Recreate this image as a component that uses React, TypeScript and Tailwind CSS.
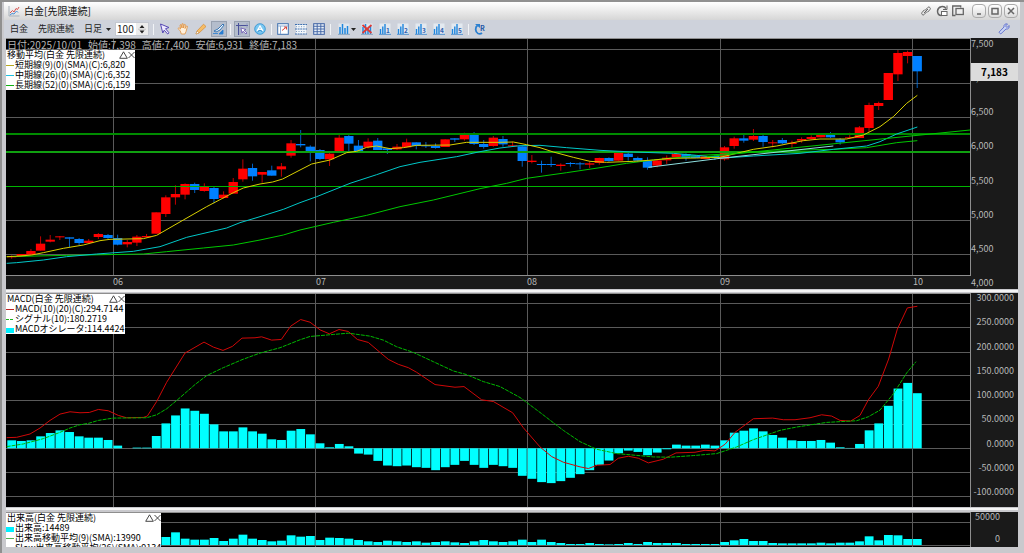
import React from 'react';

type Candle = [up: 0 | 1, top: number, bottom: number, high: number, low: number];

// body top / body bottom / high / low in chart units, one entry per trading day
const CANDLES: Candle[] = [
    [1, 408, 412, 406, 416], [1, 402, 409, 402, 409], [1, 393, 404, 387, 404], [1, 371, 392, 349, 392],
    [1, 359, 365, 345, 367], [1, 349, 352, 348, 360], [0, 352, 356, 352, 382], [0, 357, 369, 354, 375],
    [1, 362, 369, 357, 369], [1, 342, 351, 339, 357], [0, 345, 354, 342, 357], [0, 354, 374, 344, 376],
    [1, 366, 373, 360, 382], [1, 350, 368, 345, 378], [1, 348, 352, 342, 352], [1, 277, 341, 277, 341],
    [1, 232, 282, 226, 291], [1, 222, 232, 196, 254], [1, 192, 224, 190, 238], [0, 192, 210, 188, 219],
    [1, 201, 213, 190, 215], [0, 204, 237, 200, 250], [1, 224, 234, 214, 236], [1, 186, 221, 174, 221],
    [1, 146, 178, 118, 185], [0, 144, 169, 131, 182], [1, 156, 164, 156, 188], [0, 151, 167, 137, 167],
    [1, 139, 148, 129, 170], [1, 70, 107, 60, 113], [0, 72, 76, 30, 82], [0, 80, 94, 76, 124],
    [0, 90, 117, 87, 120], [1, 101, 118, 95, 138], [1, 53, 95, 44, 95], [0, 48, 71, 44, 95],
    [0, 77, 94, 60, 94], [1, 65, 82, 55, 85], [0, 62, 90, 54, 90], [0, 85, 90, 85, 102],
    [1, 80, 88, 72, 90], [1, 67, 82, 56, 82], [0, 67, 78, 67, 88], [0, 76, 79, 66, 84],
    [0, 78, 84, 70, 86], [1, 58, 81, 58, 81], [0, 55, 59, 55, 66], [1, 43, 58, 38, 62],
    [0, 40, 72, 36, 75], [0, 72, 81, 60, 86], [1, 53, 78, 48, 80], [0, 57, 73, 48, 80],
    [1, 76, 79, 65, 80], [0, 79, 123, 79, 140], [1, 122, 126, 105, 130], [0, 132, 135, 122, 158],
    [0, 132, 135, 110, 141], [1, 134, 138, 130, 152], [0, 129, 132, 126, 140], [0, 130, 133, 126, 148],
    [1, 130, 134, 126, 144], [1, 114, 129, 113, 134], [0, 114, 123, 112, 125], [1, 95, 122, 95, 122],
    [0, 101, 111, 97, 122], [0, 114, 122, 110, 126], [0, 123, 143, 112, 149], [1, 121, 137, 118, 142],
    [1, 113, 121, 106, 132], [1, 102, 112, 97, 112], [0, 102, 114, 100, 122], [0, 106, 114, 106, 114],
    [1, 109, 117, 109, 117], [0, 108, 114, 106, 120], [1, 82, 118, 78, 122], [1, 55, 78, 50, 86],
    [0, 55, 62, 42, 68], [1, 48, 59, 27, 63], [0, 48, 66, 45, 80], [1, 67, 70, 60, 82],
    [0, 60, 70, 54, 72], [1, 68, 72, 62, 84], [1, 57, 62, 52, 68], [1, 51, 57, 46, 58],
    [1, 44, 52, 42, 52], [0, 39, 52, 36, 54], [0, 58, 67, 54, 74], [1, 52, 55, 38, 56],
    [1, 22, 54, 18, 54], [1, -45, 24, -52, 36], [1, -51, -42, -55, -30], [1, -141, -60, -141, -60],
    [1, -201, -137, -210, -117], [1, -204, -192, -208, -170], [0, -192, -146, -192, -96],
];

const SMA_SHORT = '20,410 60,408 95,405 130,398 190,385 250,375 300,362 330,358 430,356 470,346 550,300 620,260 700,218 730,204 780,192 818,186 848,177 900,150 935,132 990,120 1040,98 1070,94 1100,82 1130,78 1170,86 1210,83 1250,76 1350,75 1400,67 1500,67 1540,66 1580,74 1620,83 1660,96 1720,112 1770,124 1820,127 1900,124 1960,120 2010,115 2090,114 2160,112 2210,100 2260,88 2330,78 2410,62 2460,57 2540,57 2590,45 2640,20 2680,-10 2720,-50 2752,-74';
const SMA_MID = '20,430 50,428 130,420 200,410 290,402 400,394 480,380 560,352 680,324 720,308 780,290 850,268 900,248 950,230 1050,190 1130,164 1200,140 1260,127 1370,110 1440,95 1500,84 1560,77 1620,76 1700,83 1800,91 1900,96 2020,100 2090,106 2170,114 2260,108 2400,100 2500,88 2600,78 2640,65 2690,42 2752,21';
const SMA_LONG = '20,410 200,406 430,402 500,395 610,384 700,375 780,360 850,345 900,330 1000,307 1100,286 1200,260 1300,240 1440,206 1520,190 1580,175 1700,158 1800,143 1880,130 1960,120 2100,106 2160,103 2280,95 2400,90 2500,88 2600,83 2690,68 2752,62';

const OSCILLATOR = [
    465, 467, 465, 453, 443, 435, 440, 453, 457, 457, 464, 481, 489, 487, 487, 452, 414, 390, 369,
    376, 385, 417, 438, 438, 426, 438, 445, 462, 464, 436, 431, 447, 474, 486, 476, 483, 505, 508,
    527, 541, 543, 541, 546, 548, 555, 546, 539, 527, 539, 548, 539, 543, 548, 572, 581, 591, 594,
    588, 578, 567, 555, 539, 526, 504, 496, 500, 510, 502, 492, 478, 481, 481, 478, 481, 465, 442,
    436, 429, 438, 449, 457, 465, 467, 467, 464, 472, 486, 488, 476, 435, 414, 361, 309, 292, 323,
];

const MACD_LINE = '20,457 50,456 90,446 120,428 150,405 180,386 210,379 240,382 268,381 295,372 325,376 355,390 380,397 430,396 442,392 470,348 500,290 555,202 612,169 640,184 669,194 697,182 726,157 765,156 785,153 815,163 844,161 872,121 902,101 930,109 960,132 988,144 1017,131 1045,137 1072,161 1105,170 1140,200 1165,221 1195,236 1225,246 1250,260 1305,297 1365,305 1392,303 1445,343 1480,348 1538,382 1570,427 1620,485 1655,514 1690,531 1740,545 1765,550 1792,540 1830,538 1855,519 1885,513 1915,519 1945,533 1990,522 2028,503 2085,501 2115,495 2145,497 2175,477 2205,441 2260,400 2318,398 2350,403 2385,403 2430,397 2465,388 2495,392 2520,405 2552,407 2580,390 2605,343 2635,302 2666,220 2692,130 2722,66 2752,61';
const SIGNAL_LINE = '20,484 70,476 130,460 180,441 210,428 240,418 265,414 295,405 340,398 440,397 470,388 500,370 530,345 585,297 620,270 670,246 726,222 780,202 840,186 900,162 930,152 1000,146 1045,142 1110,151 1150,163 1190,183 1240,200 1300,228 1360,256 1400,267 1450,288 1500,303 1560,336 1620,381 1690,435 1740,469 1790,492 1850,505 1960,515 2010,516 2080,511 2150,505 2210,485 2260,463 2340,435 2390,425 2480,411 2570,406 2605,394 2640,374 2680,325 2720,262 2748,228';

const VOLUME = [
    760, 760, 758, 757, 758, 760, 762, 760, 761, 762, 760, 758, 760, 761, 760, 745, 753, 739, 758,
    761, 761, 756, 765, 758, 746, 758, 762, 766, 764, 748, 752, 750, 762, 755, 756, 758, 762, 766,
    768, 764, 766, 768, 766, 770, 768, 766, 769, 771, 766, 762, 766, 768, 766, 761, 768, 761, 768,
    771, 774, 774, 771, 774, 775, 774, 771, 774, 768, 771, 771, 771, 774, 774, 774, 774, 768, 763,
    759, 765, 765, 771, 772, 772, 772, 772, 770, 772, 770, 770, 766, 751, 763, 747, 748, 759, 759,
];

const MONTH_LINES = [339, 947, 1581, 2160, 2738];
const MONTHS = ['06', '07', '08', '09', '10'];
const PRICE_TICKS = ['7,500', '7,000', '6,500', '6,000', '5,500', '5,000', '4,500', '4,000'];
const MACD_TICKS = ['300.0000', '250.0000', '200.0000', '150.0000', '100.0000', '50.0000', '0.0000', '-50.0000', '-100.0000'];

const dayX = (i: number) => 35 + 28.9 * i;

interface ChartProps {
    viewBox: string;
    label: string;
    rows: number[];
    children: React.ReactNode;
}

const Chart: React.FC<ChartProps> = ({ viewBox, label, rows, children }) => (
    <svg viewBox={viewBox} preserveAspectRatio="none" role="img" aria-label={label} className="absolute inset-0 h-full w-full">
        <g stroke="#5a5a5a" shapeRendering="crispEdges">
            {rows.map((y) => <line key={y} x1="18" x2="2910" y1={y} y2={y} vectorEffect="non-scaling-stroke" />)}
            {MONTH_LINES.map((x) => <line key={x} x1={x} x2={x} y1="-300" y2="900" vectorEffect="non-scaling-stroke" />)}
        </g>
        {children}
    </svg>
);

const Line: React.FC<{ points: string; color: string; dash?: string }> = ({ points, color, dash }) => (
    <polyline points={points} fill="none" stroke={color} strokeWidth="1" strokeDasharray={dash} vectorEffect="non-scaling-stroke" />
);

const Bars: React.FC<{ values: number[]; base: number }> = ({ values, base }) => (
    <g fill="#00ffff">
        {values.map((v, i) => (
            <rect key={i} x={dayX(i) - 13} width="26.5" y={Math.min(v, base)} height={Math.abs(v - base)} />
        ))}
    </g>
);

interface LegendItem {
    text: string;
    color: string;
    kind?: 'bar' | 'dash';
}

const Legend: React.FC<{ title: string; items: LegendItem[]; className: string }> = ({ title, items, className }) => (
    <div className={`absolute left-0 bg-white text-[9px] leading-[10px] whitespace-nowrap text-black ${className}`}>
        <div className="flex h-[10px] items-center justify-between pl-px">
            <span>{title}</span>
            <span className="flex">
                <button aria-label="最小化">
                    <svg viewBox="0 0 9 8" className="h-2 w-[9px]"><path d="M4.5 .8 8.3 7.3H.7z" fill="none" stroke="#333" strokeWidth=".9" /></svg>
                </button>
                <button aria-label="閉じる">
                    <svg viewBox="0 0 7 8" className="h-2 w-[7px]"><path d="m.5 1 6 6m0-6-6 6" stroke="#333" strokeWidth=".9" /></svg>
                </button>
            </span>
        </div>
        {items.map((item) => (
            <div key={item.text} className="flex h-[10px] items-center">
                <svg viewBox="0 0 9 8" shapeRendering="crispEdges" className="h-2 w-[9px] shrink-0">
                    {item.kind === 'bar'
                        ? <rect x="0" y="3" width="8" height="5" fill={item.color} />
                        : <path d="M0 4.5h8" stroke={item.color} strokeDasharray={item.kind === 'dash' ? '3 1' : undefined} />}
                </svg>
                <span>{item.text}</span>
            </div>
        ))}
    </div>
);

interface ToolProps {
    label: string;
    pressed?: boolean;
    children: React.ReactNode;
}

const Tool: React.FC<ToolProps> = ({ label, pressed, children }) => (
    <button aria-label={label} aria-pressed={pressed} className={`flex h-[14px] w-[14px] shrink-0 items-center justify-center ${pressed ? 'bg-[#b4bdcc] outline outline-[#98a1b0]' : ''}`}>
        <svg viewBox="0 0 12 12" className="h-3 w-3" fill="none">{children}</svg>
    </button>
);

const Divider = () => <span className="h-[11px] w-px shrink-0 bg-[#f1f3f6]" />;

const MiniBars = () => (
    <>
        <rect x=".5" y=".5" width="11" height="10.5" fill="#dfe6ee" />
        <path d="M2 11V4M4.500 11V1M7 11V5M9.500 11V3" stroke="#1f86dd" strokeWidth="1.500" />
        <path d="M0 11.300h12" stroke="#6f94b8" strokeWidth=".8" />
    </>
);

// stepped bars with a small number in the lower right corner
const PresetIcon: React.FC<{ n: string }> = ({ n }) => (
    <>
        <rect x=".5" y=".5" width="11" height="10.500" fill="#e3e9f0" />
        <path d="M1.500 11V6M3.800 11V3.500M6 11V1" stroke="#1f86dd" strokeWidth="1.400" />
        <path d="M0 11.300h12" stroke="#4f90d0" strokeWidth="1" />
        <text x="7" y="9.500" fontSize="6.500" fontWeight="700" fill="#2f62b0">{n}</text>
    </>
);

const PRESETS = ['1', '2', '3', '4', '5'];

const Toolbar = () => (
    <div className="flex h-[18px] items-center gap-1 bg-[#ced2db] pr-2.5 pl-1.5 text-[9px] leading-3 text-[#222]">
        <span className="pr-1.5">白金</span>
        <span className="pr-1.5">先限連続</span>
        <div className="flex items-center">
            <select aria-label="足種" className="w-[22px] appearance-none">
                <option>日足</option>
            </select>
            <svg viewBox="0 0 5 3" className="h-[3px] w-[5px]"><path d="M0 0h5L2.5 3z" fill="#222" /></svg>
        </div>
        <div className="flex h-[14px] border border-[#c4c8d0] bg-white">
            <input aria-label="表示本数" defaultValue="100" className="w-5 pl-px text-[10px] leading-3 outline-none" />
            <button aria-label="本数の増減" className="flex w-3 items-center justify-center bg-[#ececec]">
                <svg viewBox="0 0 8 10" className="h-2.5 w-2"><path d="M1.500 4 4 1l2.500 3zM1.500 6.500 4 9.500l2.500-3z" fill="#222" /><path d="M0 5.200h8" stroke="#aaa" strokeWidth=".6" /></svg>
            </button>
        </div>
        <Divider />
        <Tool label="選択"><path d="m1.500 1 8.500 3.500-3.500 1.200L10 9.800 8.700 11 5.200 7.200 3.800 10z" fill="#efeaff" stroke="#5548b4" /></Tool>
        <Tool label="移動"><path d="M3.300 8 1 5.500l1-.8L3.600 6 3 2l1-.4L5 5V.8h1.100L6.300 5l1-3.700 1 .3L8 5.500l1.600-2.600.9.500L9 8.500 8 11H4.300z" fill="#fff0dc" stroke="#e0913c" strokeWidth=".8" /></Tool>
        <Tool label="描画"><path d="m1 11 1-3 6.500-6.800L11 3.500 4 10z" fill="#f6bd66" stroke="#d48a35" strokeWidth=".7" /><path d="m1 11 1-3 2 2z" fill="#fff" stroke="#b98243" strokeWidth=".5" /></Tool>
        <Tool label="ライン" pressed><path d="m1 8 4-2 5-5 1 1-4 5-4 2z" fill="#f4faff" stroke="#246ab0" strokeWidth=".9" /><path d="m6 11 4-4v4zM0 10.500h5" fill="#287dd2" stroke="#287dd2" strokeWidth=".8" /></Tool>
        <Divider />
        <Tool label="クロスカーソル" pressed><path d="M2.500 0v12M0 2.500h12" stroke="#49519a" /><path d="m5 5 5 1.500-2 .7L11 10l-1 1-3-2.800-1 2z" fill="#fff" stroke="#6654b0" strokeWidth=".8" /><path d="M4 2.500V12M11 0v5" stroke="#8890bd" strokeWidth=".6" /></Tool>
        <Tool label="同期"><circle cx="6" cy="6" r="5.300" fill="#7ac7f2" stroke="#2b8fd0" strokeWidth=".8" /><path d="M3 8 6 3l3 5M4 6.300h4" stroke="#fff" strokeWidth="1.200" /><path d="m3.500 9 2.500-2 2.500 2" stroke="#2478b8" strokeWidth=".7" /></Tool>
        <Divider />
        <Tool label="チャート設定"><rect x=".7" y=".7" width="10.600" height="10.600" fill="#fff" stroke="#3e6fae" /><path d="M1 3h10M3.500 3v8" stroke="#8cadd6" /><path d="M5 7.500 9.500 4M9.500 4v2.500M9.500 4H7" stroke="#d9463c" /></Tool>
        <Tool label="四本値表示"><rect x="1" y="1" width="10" height="10" fill="#f2f6fa" /><path d="M0 1.500h12M0 6h12M0 11h12" stroke="#3e6fae" strokeDasharray="2 .6" /><path d="M1 3.700h10M1 8.500h10" stroke="#7b99bf" strokeDasharray="1 1.500" /></Tool>
        <Tool label="一覧表"><rect x=".7" y=".7" width="10.600" height="10.600" fill="#e9f0f8" stroke="#3d61a4" /><path d="M.7 3.300h10.600M.7 6h10.600M.7 8.700h10.600M4.200.7v10.600M7.800.7v10.600" stroke="#3d61a4" strokeWidth=".9" /></Tool>
        <Divider />
        <div className="flex items-center pl-0.5">
            <Tool label="指標"><MiniBars /></Tool>
            <svg viewBox="0 0 5 3" className="h-[3px] w-[5px]"><path d="M0 0h5L2.500 3z" fill="#222" /></svg>
        </div>
        <Tool label="指標を消去"><MiniBars /><path d="m1.500 2 9 8m0-8-9 8" stroke="#e03a34" strokeWidth="1.700" /></Tool>
        {PRESETS.map((n) => (
            <Tool key={n} label={`指標セット${n}`}><PresetIcon n={n} /></Tool>
        ))}
        <Divider />
        <Tool label="再読込"><path d="M3.500 2.500C1 4 1 9 4 10.500c1.500.6 3 .3 4-.5" stroke="#2a7fd0" strokeWidth="1.800" /><path d="M1 1h5v4z" fill="#2a7fd0" /><text x="6" y="8" fontSize="7" fontWeight="700" fill="#2458a8">R</text></Tool>
        <button aria-label="設定" className="ml-auto">
            <svg viewBox="0 0 12 12" className="h-3 w-3"><path d="M11 2.500 9 4.500 7.500 3l2-2C7.500.3 5.500 1.800 6 4L1 9.200 2.700 11 8 6c2 .6 3.800-1.300 3-3.500z" fill="#c9d4f5" stroke="#5b6ccd" strokeWidth=".9" /></svg>
        </button>
    </div>
);

const TitleBar = () => (
    <header className="flex h-[18px] items-center bg-linear-to-b from-white to-[#d6d6d6] pl-1">
        <svg viewBox="0 0 12 12" className="h-3 w-3" fill="none">
            <path d="M1 1v10h10.500" stroke="#a9b2bb" />
            <path d="m2 8 2.500-2.500L6 7l2-3.500 1.500 1L11 2" stroke="#d9534f" />
            <path d="m2 10 2-1.500L6 9l2.500-3L10 7.500" stroke="#4c8fd6" />
        </svg>
        <h1 className="ml-1 text-[10px] leading-3 text-[#111]">白金[先限連続]</h1>
        <div className="ml-auto flex items-center gap-1 pr-0.5 text-[#666]">
            <button aria-label="リンク" className="w-3">
                <svg viewBox="0 0 12 12" className="h-3 w-3" fill="none" stroke="currentColor"><path d="M5 5.500 8 2.300c1-1 3.200.8 2 2.200L7.500 7.300M7 6.500 4 9.700c-1 1-3.200-.8-2-2.200l2.500-2.800M4 8l4-4" /></svg>
            </button>
            <button aria-label="切替" className="w-3">
                <svg viewBox="0 0 12 12" className="h-3 w-3" fill="none" stroke="currentColor"><path d="M10 3.500C8 .5 2 1 1.500 6c0 3 2 4.500 4 4.500" strokeWidth="1.500" /><path d="M11 .5v4H7" /><rect x="5.500" y="6.500" width="5.500" height="4" fill="#fff" /></svg>
            </button>
            <button aria-label="複製" className="mr-1 w-3">
                <svg viewBox="0 0 12 12" className="h-3 w-3" fill="none" stroke="currentColor"><path d="M3.500 10.500H.7V1h8v1.500" strokeWidth="1.300" /><rect x="4" y="3.500" width="7.300" height="6" fill="#eee" strokeWidth="1.300" /></svg>
            </button>
            <div className="flex gap-0.5">
                {[
                    { label: '最小化', d: 'M3 8h4' },
                    { label: '最大化', d: 'M2 2.500h6v5.500H2z' },
                    { label: '閉じる', d: 'm2 2 6 6m0-6-6 6' },
                ].map(({ label, d }) => (
                    <button key={label} aria-label={label} className="flex h-[14px] w-[14px] items-center justify-center rounded-sm border border-[#aaa] bg-linear-to-b from-white to-[#dcdcdc]">
                        <svg viewBox="0 0 10 10" className="h-2.5 w-2.5" fill="none" stroke="currentColor" strokeWidth="1.500"><path d={d} /></svg>
                    </button>
                ))}
            </div>
        </div>
    </header>
);

const AXIS = 'flex w-[47px] shrink-0 flex-col justify-between bg-[#1a1a1a] text-[9px] text-[#b8b8b8]';
const PLOT = 'relative min-w-0 flex-1 overflow-hidden border-t border-r border-[#8e8e8e] bg-black';

const PricePanel = () => (
    <section className="flex min-h-0 flex-[251]">
        <div className="flex min-w-0 flex-1 flex-col">
            <div className={`${PLOT} border-b`}>
                <Chart viewBox="18 -243 2892 708" label="ローソク足" rows={[-212, -110, -7, 97, 300, 403]}>
                    {CANDLES.map(([up, top, bottom, high, low], i) => (
                        <g key={i} fill={up ? '#ff0000' : '#0080ff'}>
                            <rect x={dayX(i) - 1.5} y={high} width="3" height={low - high} opacity=".75" />
                            <rect x={dayX(i) - 14} y={top} width="28" height={bottom - top} />
                        </g>
                    ))}
                    <g shapeRendering="crispEdges">
                        <line x1="18" x2="2910" y1="42" y2="42" stroke="#008c00" strokeWidth="2" vectorEffect="non-scaling-stroke" />
                        <line x1="18" x2="2910" y1="96" y2="96" stroke="#10a010" strokeWidth="2" vectorEffect="non-scaling-stroke" />
                        <line x1="18" x2="2910" y1="199" y2="199" stroke="#00b400" vectorEffect="non-scaling-stroke" />
                    </g>
                    <Line points={SMA_LONG} color="#00c800" />
                    <Line points={SMA_MID} color="#00c8c8" />
                    <Line points={SMA_SHORT} color="#d8d000" />
                    <Line points="2120,110 2910,30" color="#00c800" />
                    <Line points="1945,142 2160,115 2500,78" color="#8fe0e0" />
                </Chart>
                <p className="absolute top-0 left-px flex gap-1.5 text-[10px] leading-[11px] whitespace-nowrap text-[#b5b5b5]">
                    <span>日付:2025/10/01</span>
                    <span>始値:7,398</span>
                    <span>高値:7,400</span>
                    <span>安値:6,931</span>
                    <span>終値:7,183</span>
                </p>
                <Legend
                    className="top-[11px] min-w-[129px]"
                    title="移動平均(白金 先限連続)"
                    items={[
                        { text: '短期線(9)(0)(SMA)(C):6,820', color: '#b8a820' },
                        { text: '中期線(26)(0)(SMA)(C):6,352', color: '#20c0e0' },
                        { text: '長期線(52)(0)(SMA)(C):6,159', color: '#10b010' },
                    ]}
                />
            </div>
            <div className="grid h-[13px] shrink-0 grid-cols-[107fr_203fr_211fr_193fr_193fr_58fr] bg-[#1a1a1a] text-[9px] leading-[11px] text-[#b8b8b8]">
                <span />
                {MONTHS.map((m) => <span key={m}>{m}</span>)}
            </div>
        </div>
        <div className={`${AXIS} relative leading-3`}>
            {PRICE_TICKS.map((t) => <span key={t}>{t}</span>)}
            <div className="absolute top-[10%] right-0 left-0 bg-[#dcdcdc] py-px text-center text-[10px] leading-4 font-bold text-black">7,183</div>
        </div>
    </section>
);

const MacdPanel = () => (
    <section className="flex min-h-0 flex-[214]">
        <div className={PLOT}>
            <Chart viewBox="18 24 2892 642" label="MACD" rows={[54, 126, 199, 271, 344, 417, 489, 562, 635]}>
                <Bars values={OSCILLATOR} base={489} />
                <Line points={MACD_LINE} color="#d00808" />
                <Line points={SIGNAL_LINE} color="#00b800" dash="4 1" />
            </Chart>
            <Legend
                className="top-0 min-w-[117px]"
                title="MACD(白金 先限連続)"
                items={[
                    { text: 'MACD(10)(20)(C):294.7144', color: '#c02020' },
                    { text: 'シグナル(10):180.2719', color: '#20b020', kind: 'dash' },
                    { text: 'MACDオシレータ:114.4424', color: '#00f0ff', kind: 'bar' },
                ]}
            />
        </div>
        <div className={`${AXIS} pr-1 pb-2.5 text-right leading-[10px]`}>
            {MACD_TICKS.map((t) => <span key={t}>{t}</span>)}
        </div>
    </section>
);

const VolumePanel = () => (
    <section className="flex min-h-0 flex-[35]">
        <div className={PLOT}>
            <Chart viewBox="18 681 2892 102" label="出来高" rows={[709, 778]}>
                <Bars values={VOLUME} base={777} />
            </Chart>
            <Legend
                className="top-0 min-w-[151px]"
                title="出来高(白金 先限連続)"
                items={[
                    { text: '出来高:14489', color: '#00f0ff', kind: 'bar' },
                    { text: '出来高移動平均(9)(SMA):13990', color: '#50b050' },
                    { text: 'Slow出来高移動平均(26)(SMA):9134', color: '#f0b0b0' },
                ]}
            />
        </div>
        <div className={`${AXIS} pr-[18px] pb-[3px] text-right leading-[10px]`}>
            <span>50000</span>
            <span>0</span>
        </div>
    </section>
);

const App: React.FC = () => (
    <main className="flex h-screen flex-col border-t-2 border-l-2 border-[#909090] bg-[#c9c9cd] font-['Noto_Sans_CJK_JP',sans-serif]">
        <div className="pr-1 pl-0.5">
            <TitleBar />
            <Toolbar />
        </div>
        <div className="flex min-h-0 flex-1 flex-col pr-1.5 pb-1.5 pl-1">
            <PricePanel />
            <div className="my-px h-0.5 shrink-0 bg-[#f4f4f4]" />
            <MacdPanel />
            <div className="mt-px mb-0.5 h-0.5 shrink-0 bg-[#f4f4f4]" />
            <VolumePanel />
        </div>
    </main>
);

export default App;
